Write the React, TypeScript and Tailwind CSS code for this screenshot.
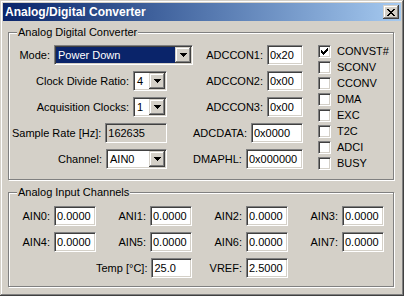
import * as React from "react";

// Win2000 bevels
const sunken =
  "border border-t-[#808080] border-l-[#808080] border-b-white border-r-white shadow-[inset_1px_1px_0_#404040,inset_-1px_-1px_0_#d4d0c8]";
const raised =
  "shadow-[inset_-1px_-1px_0_#404040,inset_1px_1px_0_#d4d0c8,inset_-2px_-2px_0_#808080,inset_2px_2px_0_#fff]";
const group =
  "border border-[#808080] shadow-[inset_1px_1px_0_#fff,1px_1px_0_#fff] ml-[5px] w-[386px] min-w-0 p-0";

function Field({ value, w, gray }: { value: string; w: string; gray?: boolean }) {
  return (
    <div
      className={`h-[20px] ${w} ${sunken} ${gray ? "bg-[#d4d0c8]" : "bg-white"} flex items-center pl-[2px] leading-none whitespace-nowrap`}
    >
      {value}
    </div>
  );
}

function Combo({ value, w, selected }: { value: string; w: string; selected?: boolean }) {
  return (
    <div className={`h-[20px] ${w} ${sunken} bg-white flex p-[1px]`}>
      <div
        className={`flex-1 flex items-center pl-[2px] leading-none ${selected ? "bg-[#0a246a] text-white" : ""}`}
      >
        {value}
      </div>
      <div className={`w-[16px] bg-[#d4d0c8] ${raised} flex items-center justify-center`}>
        <svg width="7" height="4" viewBox="0 0 7 4" shapeRendering="crispEdges">
          <path d="M0 0h7v1H0zM1 1h5v1H1zM2 2h3v1H2zM3 3h1v1H3z" fill="#000" />
        </svg>
      </div>
    </div>
  );
}

function Check({ label, checked }: { label: string; checked?: boolean }) {
  return (
    <div className="flex items-start h-[16px]">
      <div className={`w-[13px] h-[13px] bg-white ${sunken} flex items-center justify-center`}>
        {checked && (
          <svg width="7" height="7" viewBox="0 0 7 7" shapeRendering="crispEdges">
            <path
              d="M0 2h1v3H0zM1 3h1v3H1zM2 4h1v3H2zM3 3h1v3H3zM4 2h1v3H4zM5 1h1v3H5zM6 0h1v3H6z"
              fill="#000"
            />
          </svg>
        )}
      </div>
      <span className="ml-[6px] leading-[13px]">{label}</span>
    </div>
  );
}

function Row({ label, children, pad }: { label: string; children: React.ReactNode; pad?: string }) {
  return (
    <div className={`h-[20px] flex items-center justify-end gap-[4px] ${pad ?? ""}`}>
      <span className="whitespace-nowrap">{label}</span>
      {children}
    </div>
  );
}

function Cell({ label, value, w }: { label?: string; value?: string; w: string }) {
  return (
    <div className={`${w} h-[20px] flex items-center justify-end gap-[4px]`}>
      {label && <span className="whitespace-nowrap">{label}</span>}
      {value && <Field value={value} w="w-[42px]" />}
    </div>
  );
}

export default function App() {
  const bits = [
    { name: "CONVST#", on: true },
    { name: "SCONV" },
    { name: "CCONV" },
    { name: "DMA" },
    { name: "EXC" },
    { name: "T2C" },
    { name: "ADCI" },
    { name: "BUSY" },
  ];

  return (
    <div
      className={`w-[404px] h-[296px] bg-[#d4d0c8] p-[3px] text-[11px] text-black font-['Liberation_Sans',Arial,sans-serif] shadow-[inset_-1px_-1px_0_#404040,inset_1px_1px_0_#d4d0c8,inset_-2px_-2px_0_#808080,inset_2px_2px_0_#fff] overflow-hidden`}
    >
      {/* title bar */}
      <div className="h-[18px] flex items-center justify-between bg-gradient-to-r from-[#0a246a] to-[#a6caf0] pl-[2px] pr-[2px]">
        <span className="text-white font-bold text-[12px] leading-none">Analog/Digital Converter</span>
        <button className={`w-[16px] h-[14px] bg-[#d4d0c8] ${raised} flex items-center justify-center`}>
          <svg width="8" height="7" viewBox="0 0 8 7" shapeRendering="crispEdges">
            <path
              d="M0 0h2v1H0zM6 0h2v1H6zM1 1h2v1H1zM5 1h2v1H5zM2 2h4v1H2zM3 3h2v1H3zM2 4h4v1H2zM1 5h2v1H1zM5 5h2v1H5zM0 6h2v1H0zM6 6h2v1H6z"
              fill="#000"
            />
          </svg>
        </button>
      </div>

      <fieldset className={`${group} mt-[5px] h-[154px]`}>
        <legend className="ml-[8px] px-[1px] leading-[13px] bg-[#d4d0c8]">Analog Digital Converter</legend>
        <div className="flex pt-[6px] pl-[3px]">
          <div className="w-[181px] flex flex-col gap-[6px]">
            <Row label="Mode:">
              <Combo value="Power Down" w="w-[139px]" selected />
            </Row>
            <Row label="Clock Divide Ratio:" pad="pr-[26px]">
              <Combo value="4" w="w-[34px]" />
            </Row>
            <Row label="Acquisition Clocks:" pad="pr-[26px]">
              <Combo value="1" w="w-[34px]" />
            </Row>
            <Row label="Sample Rate [Hz]:" pad="pr-[26px]">
              <Field value="162635" w="w-[62px]" gray />
            </Row>
            <Row label="Channel:" pad="pr-[26px]">
              <Combo value="AIN0" w="w-[61px]" />
            </Row>
          </div>
          <div className="w-[110px] flex flex-col gap-[6px]">
            <Row label="ADCCON1:">
              <Field value="0x20" w="w-[36px]" />
            </Row>
            <Row label="ADCCON2:">
              <Field value="0x00" w="w-[36px]" />
            </Row>
            <Row label="ADCCON3:">
              <Field value="0x00" w="w-[36px]" />
            </Row>
            <Row label="ADCDATA:">
              <Field value="0x0000" w="w-[53px]" />
            </Row>
            <Row label="DMAPHL:">
              <Field value="0x000000" w="w-[69px]" />
            </Row>
          </div>
          <div className="ml-[15px] flex flex-col">
            {bits.map((b) => (
              <Check key={b.name} label={b.name} checked={b.on} />
            ))}
          </div>
        </div>
      </fieldset>

      <fieldset className={`${group} mt-[6px] h-[101px]`}>
        <legend className="ml-[8px] px-[1px] leading-[13px] bg-[#d4d0c8]">Analog Input Channels</legend>
        <div className="flex flex-col gap-[6px] pt-[7px]">
          <div className="flex">
            <Cell label="AIN0:" value="0.0000" w="w-[87px]" />
            <Cell label="ANI1:" value="0.0000" w="w-[96px]" />
            <Cell label="AIN2:" value="0.0000" w="w-[96px]" />
            <Cell label="AIN3:" value="0.0000" w="w-[96px]" />
          </div>
          <div className="flex">
            <Cell label="AIN4:" value="0.0000" w="w-[87px]" />
            <Cell label="AIN5:" value="0.0000" w="w-[96px]" />
            <Cell label="AIN6:" value="0.0000" w="w-[96px]" />
            <Cell label="AIN7:" value="0.0000" w="w-[96px]" />
          </div>
          <div className="flex">
            <Cell w="w-[87px]" />
            <Cell label="Temp [°C]:" value="25.0" w="w-[96px]" />
            <Cell label="VREF:" value="2.5000" w="w-[96px]" />
          </div>
        </div>
      </fieldset>
    </div>
  );
}
